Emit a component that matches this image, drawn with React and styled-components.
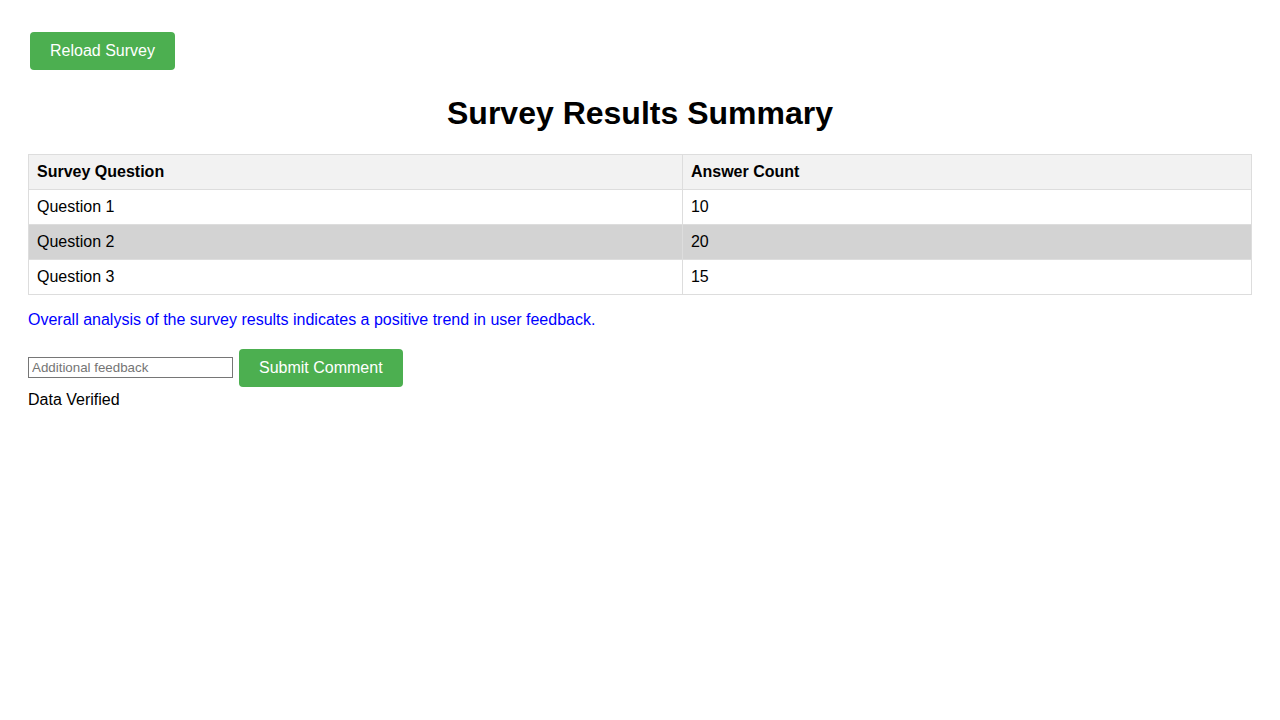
import styled, { createGlobalStyle } from 'styled-components';

const GlobalStyle = createGlobalStyle`
  body {
    margin: 8px;
    font-family: "Liberation Sans", Arial, sans-serif;
    background: #fff;
    color: #000;
  }
`;

const Page = styled.div`
  padding: 20px;
`;

const GreenButton = styled.button`
  background-color: #4caf50;
  color: #fff;
  border: none;
  border-radius: 4px;
  padding: 10px 20px;
  margin: 4px 2px;
  font-family: "Liberation Sans", Arial, sans-serif;
  font-size: 16px;
  line-height: 18px;
  cursor: pointer;
`;

const Title = styled.h1`
  text-align: center;
  font-size: 32px;
  margin: 21.44px 0;
`;

const ResultsTable = styled.table`
  width: 100%;
  border-collapse: collapse;
`;

const HeadCell = styled.th`
  border: 1px solid #ddd;
  padding: 8px;
  text-align: left;
  background-color: #f2f2f2;
  font-size: 16px;
  line-height: 18px;
`;

const Row = styled.tr`
  background-color: ${({ $shaded }) => ($shaded ? '#d3d3d3' : '#fff')};
`;

const Cell = styled.td`
  border: 1px solid #ddd;
  padding: 8px;
  font-size: 16px;
  line-height: 18px;
`;

const Analysis = styled.p`
  color: #0000ff;
  font-size: 16px;
  line-height: 18px;
  margin: 16px 0;
`;

const CommentRow = styled.div`
  display: flex;
  align-items: center;
  gap: 4px;
`;

const FeedbackInput = styled.input`
  box-sizing: border-box;
  width: 205px;
  height: 21px;
  padding: 1px 3px;
  border: 1px solid #767676;
  font-family: "Liberation Sans", Arial, sans-serif;
  font-size: 13.33px;
  &::placeholder {
    color: #757575;
  }
`;

const Status = styled.div`
  font-size: 16px;
  line-height: 18px;
`;

const rows = [
  { q: 'Question 1', count: 10 },
  { q: 'Question 2', count: 20 },
  { q: 'Question 3', count: 15 },
];

export default function App() {
  return (
    <Page>
      <GlobalStyle />
      <GreenButton>Reload Survey</GreenButton>
      <Title>Survey Results Summary</Title>
      <ResultsTable>
        <thead>
          <tr>
            <HeadCell>Survey Question</HeadCell>
            <HeadCell>Answer Count</HeadCell>
          </tr>
        </thead>
        <tbody>
          {rows.map((r, i) => (
            <Row key={r.q} $shaded={i === 1}>
              <Cell>{r.q}</Cell>
              <Cell>{r.count}</Cell>
            </Row>
          ))}
        </tbody>
      </ResultsTable>
      <Analysis>Overall analysis of the survey results indicates a positive trend in user feedback.</Analysis>
      <CommentRow>
        <FeedbackInput placeholder="Additional feedback" />
        <GreenButton>Submit Comment</GreenButton>
      </CommentRow>
      <Status>Data Verified</Status>
    </Page>
  );
}
